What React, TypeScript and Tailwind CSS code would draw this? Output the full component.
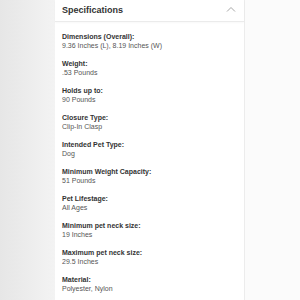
const specs = [
  { label: "Dimensions (Overall):", value: "9.36 Inches (L), 8.19 Inches (W)" },
  { label: "Weight:", value: ".53 Pounds" },
  { label: "Holds up to:", value: "90 Pounds" },
  { label: "Closure Type:", value: "Clip-In Clasp" },
  { label: "Intended Pet Type:", value: "Dog" },
  { label: "Minimum Weight Capacity:", value: "51 Pounds" },
  { label: "Pet Lifestage:", value: "All Ages" },
  { label: "Minimum pet neck size:", value: "19 Inches" },
  { label: "Maximum pet neck size:", value: "29.5 Inches" },
  { label: "Material:", value: "Polyester, Nylon" },
];

export default function App() {
  return (
    <div className="flex h-[300px] w-[300px] overflow-hidden bg-white font-['Liberation_Sans',Arial,sans-serif]">
      <div className="w-[55px] shrink-0 bg-gradient-to-r from-[#e6e6e6] to-[#f3f3f3]" />
      <div className="flex w-[190px] shrink-0 flex-col border-r border-[#ececec] bg-white">
        <div className="h-[2px] bg-[#f0f0f0]" />
        <div className="flex items-center justify-between border-b border-[#ebebeb] pl-[7px] pr-[8px] pt-[4px] pb-[5px] shadow-[0_1px_2px_rgba(0,0,0,0.03)]">
          <h2 className="text-[9px] font-bold leading-[12px] text-[#333]">Specifications</h2>
          <svg width="10" height="6" viewBox="0 0 10 6" className="mb-[2px]">
            <path d="M1 5.5 L5 1.5 L9 5.5" fill="none" stroke="#a6a6a6" strokeWidth="1" />
          </svg>
        </div>
        <div className="flex flex-col pl-[7px] pt-[10px]">
          {specs.map((s) => (
            <div key={s.label} className="mb-[9px]">
              <div className="text-[7px] font-bold leading-[9px] text-[#333]">{s.label}</div>
              <div className="text-[7px] leading-[9px] text-[#555]">{s.value}</div>
            </div>
          ))}
        </div>
      </div>
      <div className="flex-1 bg-[#fbfbfb]" />
    </div>
  );
}
